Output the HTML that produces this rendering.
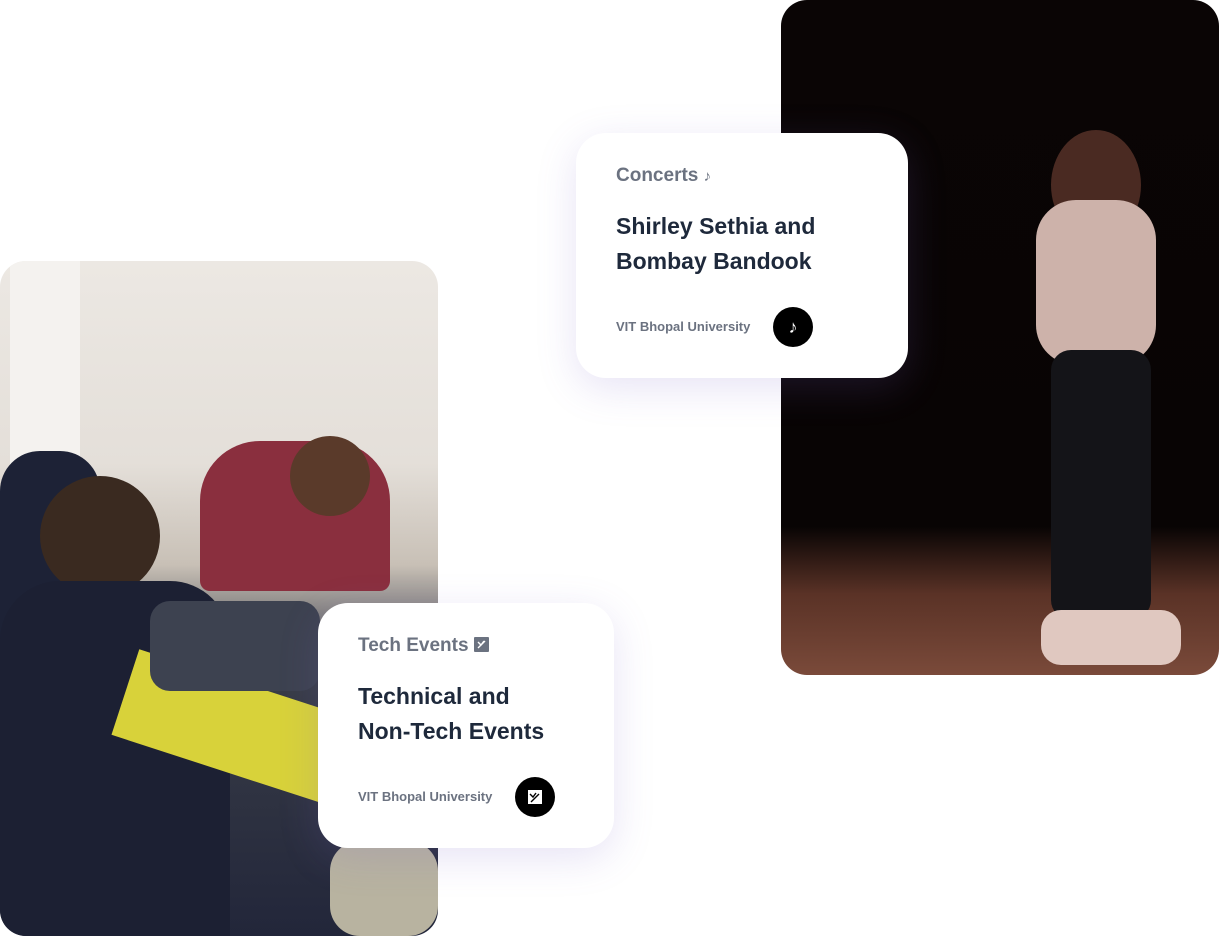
<!DOCTYPE html>
<html><head><style>
body{margin:0;width:1219px;height:936px;background:#fff;position:relative;overflow:hidden;font-family:"Liberation Sans",sans-serif}
.ph{position:absolute;overflow:hidden;border-radius:26px}
.card{position:absolute;background:#fff;border-radius:30px;box-shadow:0 10px 40px rgba(120,100,200,.18)}
.cat{position:absolute;left:40px;top:32px;font-size:19px;color:#6b7280;font-weight:bold}
.tt{position:absolute;left:40px;top:76px;font-size:23px;line-height:35px;color:#1e293b;font-weight:bold}
.un{position:absolute;left:40px;font-size:13px;color:#6b7280;font-weight:bold}
.ic{position:absolute;width:40px;height:40px;border-radius:50%;background:#000}
.b{position:absolute}
</style></head><body>
<div class="ph" style="left:0;top:261px;width:438px;height:675px;background:linear-gradient(180deg,#ece8e3 0%,#e4dfd9 30%,#c8c0b6 45%,#3a3e48 60%,#22263a 100%)">
 <div class="b" style="left:10px;top:0;width:70px;height:220px;background:#f4f2ef"></div>
 <div class="b" style="left:200px;top:180px;width:190px;height:150px;border-radius:60px 60px 10px 10px;background:#8a2f3e"></div>
 <div class="b" style="left:290px;top:175px;width:80px;height:80px;border-radius:50%;background:#5a3a2a"></div>
 <div class="b" style="left:0;top:190px;width:100px;height:400px;border-radius:40px;background:#1d2236"></div>
 <div class="b" style="left:40px;top:215px;width:120px;height:120px;border-radius:50%;background:#3a2a20"></div>
 <div class="b" style="left:0;top:320px;width:230px;height:355px;border-radius:60px 60px 0 0;background:#1c2033"></div>
 <div class="b" style="left:120px;top:420px;width:220px;height:90px;background:#d8d23a;transform:rotate(18deg)"></div>
 <div class="b" style="left:150px;top:340px;width:170px;height:90px;border-radius:20px;background:#3d4250"></div>
 <div class="b" style="left:330px;top:580px;width:108px;height:95px;border-radius:30px;background:#b8b3a0"></div>
</div>
<div class="ph" style="left:781px;top:0;width:438px;height:675px;background:linear-gradient(180deg,#0a0505 0%,#080404 78%,#5a3226 88%,#7a4a3a 100%)">
 <div class="b" style="left:270px;top:130px;width:90px;height:110px;border-radius:50%;background:#4a2a22"></div>
 <div class="b" style="left:255px;top:200px;width:120px;height:165px;border-radius:40px;background:#cdb2aa"></div>
 <div class="b" style="left:270px;top:350px;width:100px;height:270px;border-radius:20px;background:#141418"></div>
 <div class="b" style="left:260px;top:610px;width:140px;height:55px;border-radius:20px;background:#e0c8c0"></div>
</div>
<div class="card" style="left:576px;top:133px;width:332px;height:245px">
 <div class="cat">Concerts <span style="font-size:15px">♪</span></div>
 <div class="tt">Shirley Sethia and<br>Bombay Bandook</div>
 <div class="un" style="top:186px">VIT Bhopal University</div>
 <div class="ic" style="left:197px;top:174px;color:#fff;text-align:center;line-height:40px;font-size:18px">♪</div>
</div>
<div class="card" style="left:318px;top:603px;width:296px;height:245px">
 <div class="cat">Tech Events <svg width="15" height="15" viewBox="0 0 15 15" style="vertical-align:-1px"><rect width="15" height="15" rx="1" fill="#6b7280"/><path d="M4 5l3 3 3-4M4 11l7-7" stroke="#fff" stroke-width="1.4" fill="none"/></svg></div>
 <div class="tt">Technical and<br>Non-Tech Events</div>
 <div class="un" style="top:186px">VIT Bhopal University</div>
 <div class="ic" style="left:197px;top:174px"><svg width="40" height="40"><rect x="13" y="13" width="14" height="14" fill="#fff"/><path d="M15 17l3 3 3-4M16 25l8-8" stroke="#000" stroke-width="1.4" fill="none"/></svg></div>
</div>
</body></html>
